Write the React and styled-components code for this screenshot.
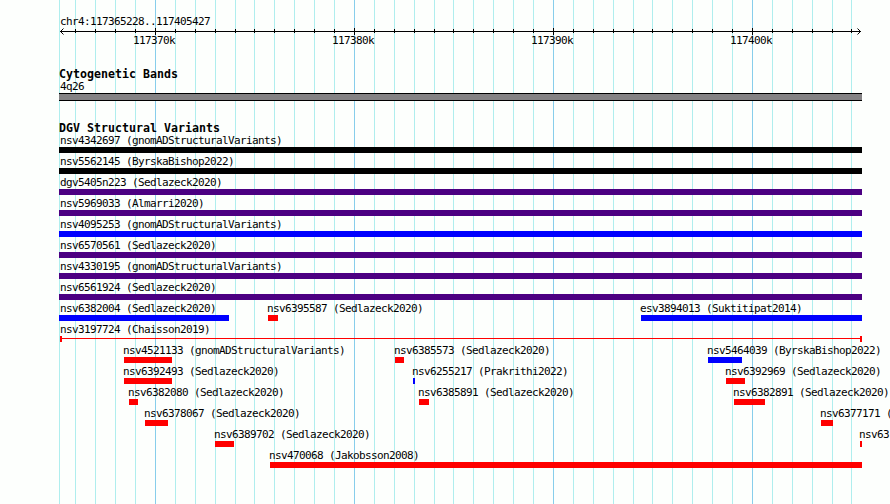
import React from "react"
import styled, { createGlobalStyle } from "styled-components"

const GlobalStyle = createGlobalStyle`
  * {
    box-sizing: border-box;
  }
  body {
    margin: 0;
    background: #fdfffd;
    overflow: hidden;
  }
`

const colors = {
  black: "#000000",
  indigo: "#4b0082",
  blue: "#0000ff",
  red: "#ff0000",
}

// Every tenth of a major interval gets a grid line, 19.9px apart
const gridLines = Array.from({ length: 40 }, (_, i) => ({
  x: Math.ceil(155 + 19.9 * (i - 4) - 0.5001),
  major: (i - 4) % 10 === 0,
}))

const scaleLabels = ["117370k", "117380k", "117390k", "117400k"]

// One array per row. start and end are pixels on the track canvas
const rows = [
  [{ name: "nsv4342697 (gnomADStructuralVariants)", start: 59, end: 862, color: "black" }],
  [{ name: "nsv5562145 (ByrskaBishop2022)", start: 59, end: 862, color: "black" }],
  [{ name: "dgv5405n223 (Sedlazeck2020)", start: 59, end: 862, color: "indigo" }],
  [{ name: "nsv5969033 (Almarri2020)", start: 59, end: 862, color: "indigo" }],
  [{ name: "nsv4095253 (gnomADStructuralVariants)", start: 59, end: 862, color: "blue" }],
  [{ name: "nsv6570561 (Sedlazeck2020)", start: 59, end: 862, color: "indigo" }],
  [{ name: "nsv4330195 (gnomADStructuralVariants)", start: 59, end: 862, color: "indigo" }],
  [{ name: "nsv6561924 (Sedlazeck2020)", start: 59, end: 862, color: "indigo" }],
  [
    { name: "nsv6382004 (Sedlazeck2020)", start: 59, end: 229, color: "blue" },
    { name: "nsv6395587 (Sedlazeck2020)", start: 268, end: 278, color: "red" },
    { name: "esv3894013 (Suktitipat2014)", start: 641, end: 862, color: "blue" },
  ],
  [{ name: "nsv3197724 (Chaisson2019)", start: 60, end: 862, color: "red", span: true }],
  [
    { name: "nsv4521133 (gnomADStructuralVariants)", start: 124, end: 172, color: "red" },
    { name: "nsv6385573 (Sedlazeck2020)", start: 395, end: 404, color: "red" },
    { name: "nsv5464039 (ByrskaBishop2022)", start: 708, end: 742, color: "blue" },
  ],
  [
    { name: "nsv6392493 (Sedlazeck2020)", start: 124, end: 172, color: "red" },
    { name: "nsv6255217 (Prakrithi2022)", start: 413, end: 415, color: "blue" },
    { name: "nsv6392969 (Sedlazeck2020)", start: 726, end: 745, color: "red" },
  ],
  [
    { name: "nsv6382080 (Sedlazeck2020)", start: 129, end: 138, color: "red" },
    { name: "nsv6385891 (Sedlazeck2020)", start: 419, end: 429, color: "red" },
    { name: "nsv6382891 (Sedlazeck2020)", start: 734, end: 765, color: "red" },
  ],
  [
    { name: "nsv6378067 (Sedlazeck2020)", start: 145, end: 168, color: "red" },
    { name: "nsv6377171 (", start: 821, end: 833, color: "red" },
  ],
  [
    { name: "nsv6389702 (Sedlazeck2020)", start: 215, end: 234, color: "red" },
    { name: "nsv63", start: 860, end: 862, color: "red" },
  ],
  [{ name: "nsv470068 (Jakobsson2008)", start: 270, end: 862, color: "red" }],
]

const Browser = styled.main`
  position: relative;
  width: 890px;
  height: 504px;
  overflow: hidden;
  color: #000;
`

const Grid = styled.svg`
  position: absolute;
  inset: 0;
`

const Tracks = styled.div`
  position: relative;
  display: flex;
  flex-direction: column;
  padding-top: 15px;
`

const Label = styled.div`
  height: 12px;
  font-family: "DejaVu Sans Mono", "Liberation Mono", monospace;
  font-size: 11px;
  line-height: 14px;
  letter-spacing: -0.622px;
  white-space: pre;
`

const Region = styled(Label)`
  padding-left: 60px;
`

const Axis = styled.svg`
  display: block;
  height: 8px;
`

const Scale = styled.div`
  display: flex;
  gap: 157px;
  height: 34px;
  margin-top: -1px;
  padding-left: 133px;
`

const ScaleLabel = styled(Label)`
  width: 42px;
`

const Heading = styled.h2`
  height: 12px;
  margin: 0;
  padding-left: 59px;
  font-family: "DejaVu Sans Mono", "Liberation Mono", monospace;
  font-size: 11.6px;
  font-weight: 700;
  line-height: 13px;
  letter-spacing: 0.016px;
  white-space: pre;
`

const Band = styled.div`
  width: 803px;
  height: 8px;
  margin: 1px 0 21px 59px;
  border: solid #000;
  border-width: 1px 0;
  background: #848284;
`

const Row = styled.div`
  display: flex;
  height: 21px;
`

const Variant = styled.div`
  flex: none;
  width: ${({ $width }) => $width}px;
  margin-left: ${({ $gap }) => $gap}px;
`

const VariantName = styled(Label)`
  margin-left: ${({ $shift }) => $shift}px;
`

const Bar = styled.div`
  height: 6px;
  margin-top: 1px;
  background: ${({ $color }) => $color};
`

const SpanBar = styled.div`
  display: flex;
  align-items: center;
  height: 6px;
  margin-top: 1px;
  border: solid ${({ $color }) => $color};
  border-width: 0 2px;
  &::before {
    content: "";
    flex: 1;
    height: 1px;
    margin-top: -1px;
    background: ${({ $color }) => $color};
  }
`

const VariantRow = ({ variants }) => (
  <Row>
    {variants.map(({ name, start, end, color, span }, i) => {
      const Glyph = span ? SpanBar : Bar
      // Names sit just left of their bar, but never left of the panel edge
      const textStart = Math.max(start - 1, 60)
      return (
        <Variant
          key={name}
          $width={end - start}
          $gap={start - (i > 0 ? variants[i - 1].end : 0)}
        >
          <VariantName $shift={textStart - start}>{name}</VariantName>
          <Glyph $color={colors[color]} />
        </Variant>
      )
    })}
  </Row>
)

const App = () => (
  <>
    <GlobalStyle />
    <Browser>
      <Grid width="890" height="504" shapeRendering="crispEdges">
        <rect x="59" width="1" height="504" fill="#afeeee" />
        {gridLines.map(({ x, major }) => (
          <rect
            key={x}
            x={x}
            width="1"
            height="504"
            fill={major ? "#87ceeb" : "#afeeee"}
          />
        ))}
      </Grid>
      <Tracks>
        <Region>chr4:117365228..117405427</Region>
        <Axis width="890" height="8" shapeRendering="crispEdges">
          <rect x="60" y="4" width="801" height="1" />
          {gridLines.map(({ x, major }) => (
            <rect
              key={x}
              x={x}
              y={major ? 1 : 2}
              width="1"
              height={major ? 7 : 4}
            />
          ))}
          <path
            d="M63.5 1.5L60.5 4.5L63.5 7.5M857.5 1.5L860.5 4.5L857.5 7.5"
            fill="none"
            stroke="#000"
            shapeRendering="auto"
          />
        </Axis>
        <Scale>
          {scaleLabels.map((text) => (
            <ScaleLabel key={text}>{text}</ScaleLabel>
          ))}
        </Scale>
        <Heading>Cytogenetic Bands</Heading>
        <Region>4q26</Region>
        <Band />
        <Heading>DGV Structural Variants</Heading>
        {rows.map((variants) => (
          <VariantRow key={variants[0].name} variants={variants} />
        ))}
      </Tracks>
    </Browser>
  </>
)

export default App
